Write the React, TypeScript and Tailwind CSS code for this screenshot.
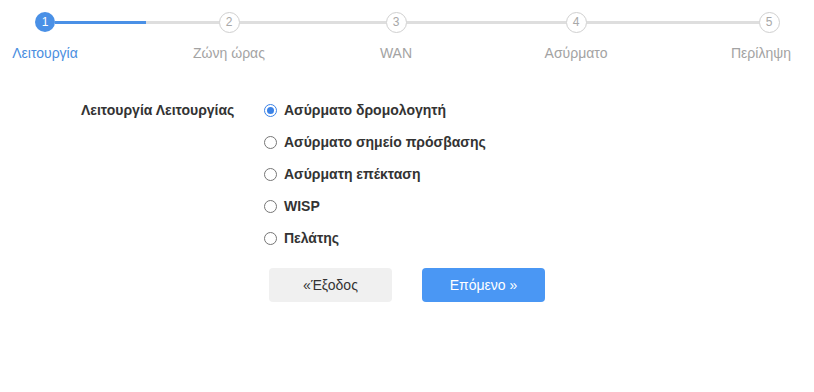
import React from 'react';

const steps = [
  { n: 1, label: 'Λειτουργία', before: 0 },
  { n: 2, label: 'Ζώνη ώρας', before: 104 },
  { n: 3, label: 'WAN', before: 87 },
  { n: 4, label: 'Ασύρματο', before: 100 },
  { n: 5, label: 'Περίληψη', before: 113 },
];

const options = [
  'Ασύρματο δρομολογητή',
  'Ασύρματο σημείο πρόσβασης',
  'Ασύρματη επέκταση',
  'WISP',
  'Πελάτης',
];

const Radio = ({ checked }: { checked: boolean }) =>
  checked ? (
    <span className="w-[13px] h-[13px] rounded-full border border-[#3b82e6] bg-white flex items-center justify-center">
      <span className="w-[7px] h-[7px] rounded-full bg-[#3b82e6]" />
    </span>
  ) : (
    <span className="w-[13px] h-[13px] rounded-full border border-[#767676] bg-white" />
  );

const Stepper = () => (
  <div className="flex items-start pt-[12px] pl-[5px]">
    {steps.map((s, i) => {
      const active = i === 0;
      const first = i === 0;
      const last = i === steps.length - 1;
      return (
        <React.Fragment key={s.n}>
          {s.before > 0 && (
            <div className="h-[20px] flex items-center" style={{ width: s.before }}>
              {i === 1 ? (
                <div className="flex w-full h-[3px]">
                  <div className="w-[61px] bg-[#4a90e6]" />
                  <div className="flex-1 bg-[#dedede]" />
                </div>
              ) : (
                <div className="w-full h-[3px] bg-[#dedede]" />
              )}
            </div>
          )}
          <div className="w-[80px] flex flex-col items-center">
            <div className="w-full h-[20px] flex items-center">
              <div className={`flex-1 h-[3px] ${first ? '' : 'bg-[#dedede]'}`} />
              {active ? (
                <div className="w-[20px] h-[20px] rounded-full bg-[#4a90e6] text-white text-[12px] leading-none flex items-center justify-center">
                  {s.n}
                </div>
              ) : (
                <div className="w-[21px] h-[21px] rounded-full bg-white border border-[#cfcfcf] text-[#a8a8a8] text-[12px] leading-none flex items-center justify-center">
                  {s.n}
                </div>
              )}
              <div className={`flex-1 h-[3px] ${first ? 'bg-[#4a90e6]' : last ? '' : 'bg-[#dedede]'}`} />
            </div>
            <span
              className={`mt-[11px] text-[14px] leading-[20px] whitespace-nowrap ${
                active ? 'text-[#4a8ee0]' : 'text-[#a3a3a3]'
              } ${last ? 'pr-[16px]' : ''}`}
            >
              {s.label}
            </span>
          </div>
        </React.Fragment>
      );
    })}
  </div>
);

export default function App() {
  return (
    <div className="w-[814px] h-[392px] bg-white font-['Liberation_Sans',Arial,sans-serif] text-[#333]">
      <Stepper />

      <div className="flex pl-[81px] mt-[37px]">
        <div className="w-[183px] text-[14px] leading-[20px] font-bold text-[#333]">
          Λειτουργία Λειτουργίας
        </div>
        <div className="flex flex-col gap-[12px]">
          {options.map((o, i) => (
            <label key={o} className="flex items-center h-[20px] gap-[7px]">
              <Radio checked={i === 0} />
              <span className="text-[14px] leading-[20px] font-bold text-[#333]">{o}</span>
            </label>
          ))}
        </div>
      </div>

      <div className="flex gap-[30px] pl-[269px] mt-[20px]">
        <button className="w-[123px] h-[34px] rounded-[4px] bg-[#f0f0f0] text-[14px] text-[#333]">
          «Έξοδος
        </button>
        <button className="w-[123px] h-[34px] rounded-[4px] bg-[#4a97f4] text-[14px] text-white">
          Επόμενο »
        </button>
      </div>
    </div>
  );
}
